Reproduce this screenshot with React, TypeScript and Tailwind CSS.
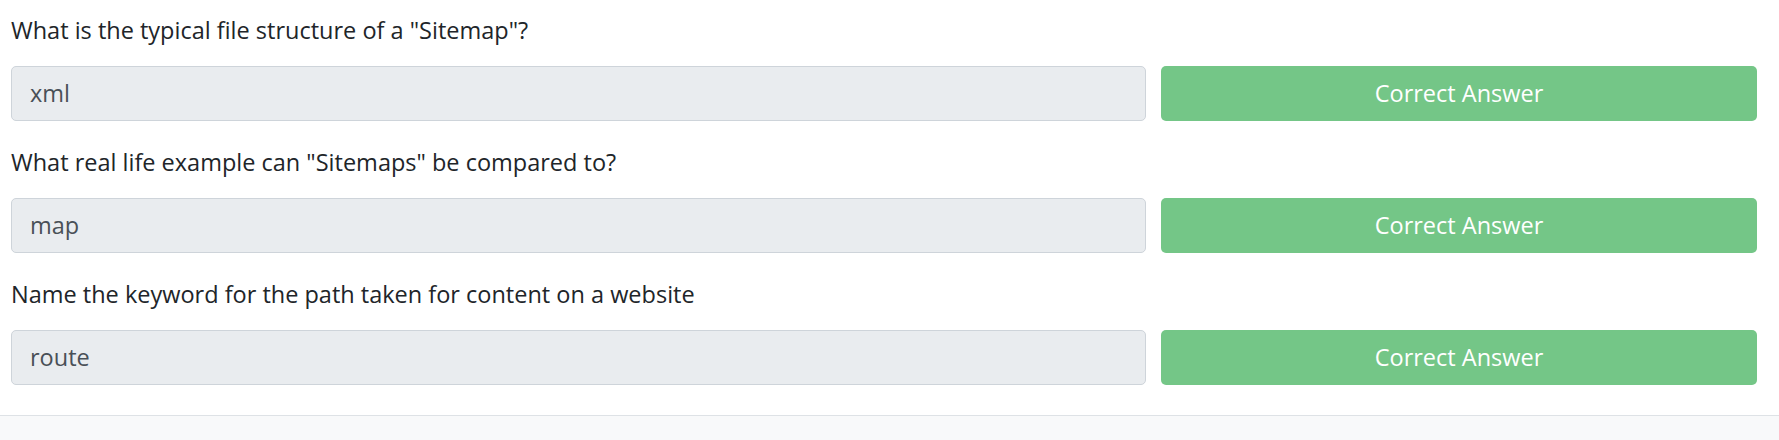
const questions = [
  { q: 'What is the typical file structure of a "Sitemap"?', a: "xml" },
  { q: 'What real life example can "Sitemaps" be compared to?', a: "map" },
  { q: "Name the keyword for the path taken for content on a website", a: "route" },
];

export default function App() {
  return (
    <div className="min-h-[440px] bg-[#f8f9fa] font-['Open_Sans',sans-serif]">
      <div className="bg-white border-b border-[#dee2e6] pl-[11px] pr-[22px] pt-[13px] pb-[30px]">
        {questions.map((item, i) => (
          <div key={i} className={i > 0 ? "mt-[24px]" : ""}>
            <p className="text-[23.5px] leading-[35px] text-[#212529] mb-[18px]">{item.q}</p>
            <div className="grid grid-cols-[1135px_1fr] gap-[15px]">
              <div className="h-[55px] flex items-center px-[18px] bg-[#e9ecef] border border-[#ced4da] rounded-[5px] text-[23.5px] text-[#495057]">
                {item.a}
              </div>
              <button className="h-[55px] rounded-[5px] bg-[#74c687] text-white text-[23.5px]">
                Correct Answer
              </button>
            </div>
          </div>
        ))}
      </div>
    </div>
  );
}
